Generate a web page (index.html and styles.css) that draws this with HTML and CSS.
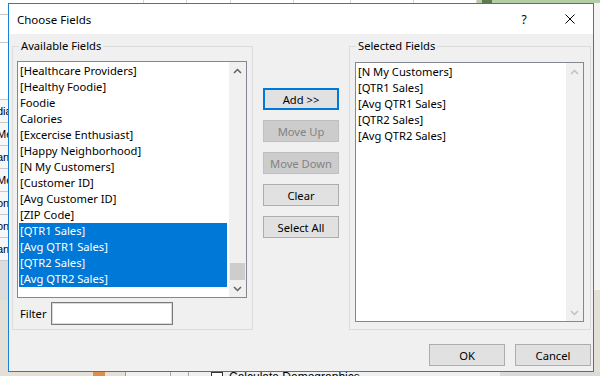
FILE: index.html
```html
<!DOCTYPE html>
<html lang="en">

<head>
	<meta charset="UTF-8">
	<title>Choose Fields</title>
	<link rel="stylesheet" href="styles.css">
</head>

<body>
	<div class="desk">
		<div class="sheet-top">
			<div class="cell"></div>
			<div class="cell"></div>
			<div class="cell"></div>
			<div class="cell"></div>
			<div class="cell"></div>
			<div class="cell"></div>
			<div class="cell"></div>
			<div class="cell green"><span class="mark"></span></div>
		</div>

		<div class="sheet-left">
			<div class="sl-a"></div>
			<div class="sl-b"></div>
			<div class="sl-c"></div>
			<div class="rec">dia</div>
			<div class="rec">Me</div>
			<div class="rec">an</div>
			<div class="rec">Me</div>
			<div class="rec">on</div>
			<div class="rec">on</div>
			<div class="rec">an</div>
			<div class="sl-grey"></div>
			<div class="sl-map"></div>
		</div>

		<div class="dialog">
			<div class="titlebar">
				<span class="title">Choose Fields</span>
				<span class="tb-btn">?</span>
				<span class="tb-btn">
					<svg width="10" height="10" viewBox="0 0 10 10"><path d="M0.5 0.5L9.5 9.5M9.5 0.5L0.5 9.5" stroke="#000" stroke-width="1" fill="none"/></svg>
				</span>
			</div>
			<div class="content">
				<div class="panes">
					<div class="group avail">
						<span class="group-title">Available Fields</span>
						<div class="listbox">
							<ul class="items">
								<li>[Healthcare Providers]</li>
								<li>[Healthy Foodie]</li>
								<li>Foodie</li>
								<li>Calories</li>
								<li>[Excercise Enthusiast]</li>
								<li>[Happy Neighborhood]</li>
								<li>[N My Customers]</li>
								<li>[Customer ID]</li>
								<li>[Avg Customer ID]</li>
								<li>[ZIP Code]</li>
								<li class="sel">[QTR1 Sales]</li>
								<li class="sel">[Avg QTR1 Sales]</li>
								<li class="sel">[QTR2 Sales]</li>
								<li class="sel">[Avg QTR2 Sales]</li>
							</ul>
							<div class="scrollbar">
								<span class="arrow"><svg width="9" height="6" viewBox="0 0 9 6"><path d="M1 5L4.5 1.5L8 5" fill="none" stroke="#606060" stroke-width="1.5"/></svg></span>
								<span class="track"><span class="thumb"></span></span>
								<span class="arrow"><svg width="9" height="6" viewBox="0 0 9 6"><path d="M1 1L4.5 4.5L8 1" fill="none" stroke="#606060" stroke-width="1.5"/></svg></span>
							</div>
						</div>
						<div class="filter-row">
							<label class="filter-label">Filter</label>
							<input type="text" class="filter">
						</div>
					</div>

					<div class="actions">
						<button class="btn default">Add &gt;&gt;</button>
						<button class="btn" disabled>Move Up</button>
						<button class="btn" disabled>Move Down</button>
						<button class="btn">Clear</button>
						<button class="btn">Select All</button>
					</div>

					<div class="group chosen">
						<span class="group-title">Selected Fields</span>
						<div class="listbox">
							<ul class="items">
								<li>[N My Customers]</li>
								<li>[QTR1 Sales]</li>
								<li>[Avg QTR1 Sales]</li>
								<li>[QTR2 Sales]</li>
								<li>[Avg QTR2 Sales]</li>
							</ul>
							<div class="scrollbar off">
								<span class="arrow"><svg width="9" height="6" viewBox="0 0 9 6"><path d="M1 5L4.5 1.5L8 5" fill="none" stroke="#c0c0c0" stroke-width="1.5"/></svg></span>
								<span class="track"></span>
								<span class="arrow"><svg width="9" height="6" viewBox="0 0 9 6"><path d="M1 1L4.5 4.5L8 1" fill="none" stroke="#c0c0c0" stroke-width="1.5"/></svg></span>
							</div>
						</div>
					</div>
				</div>
				<div class="footer">
					<button class="btn">OK</button>
					<button class="btn">Cancel</button>
				</div>
			</div>
		</div>

		<div class="sheet-right">
			<div class="sr-top"></div>
			<div class="sr-map"></div>
		</div>

		<div class="sheet-bottom">
			<div class="sb-map"><span class="road"></span></div>
			<div class="sb-cell"></div>
			<div class="sb-cell2"></div>
			<span class="sb-check"></span>
			<span class="sb-label">Calculate Demographics</span>
			<div class="sb-rest"></div>
		</div>
	</div>
</body>

</html>
```

FILE: styles.css
```css
* {
	margin: 0;
	padding: 0;
	box-sizing: border-box;
}

html,
body {
	width: 600px;
	height: 376px;
	overflow: hidden;
}

body {
	font-family: "Noto Sans", "DejaVu Sans", sans-serif;
	font-size: 11.2px;
	color: #000;
	background: #f0f0f0;
}

.desk {
	display: grid;
	grid-template-columns: 8px 586px 6px;
	grid-template-rows: 3px 369px 4px;
	width: 600px;
	height: 376px;
}

/* spreadsheet behind the dialog */
.sheet-top {
	grid-column: 1 / 4;
	display: flex;
	background: #fff;
}

.sheet-top .cell {
	border-right: 1px solid #d4d4d4;
	flex-shrink: 0;
}

.sheet-top .cell:nth-child(1) { width: 144px; }
.sheet-top .cell:nth-child(2) { width: 43px; }
.sheet-top .cell:nth-child(3) { width: 44px; }
.sheet-top .cell:nth-child(4) { width: 63px; }
.sheet-top .cell:nth-child(5) { width: 57px; }
.sheet-top .cell:nth-child(6) { width: 63px; }
.sheet-top .cell:nth-child(7) { width: 63px; }

.sheet-top .green {
	flex: 1;
	border: none;
	background: #b3cda6;
}

.green .mark {
	display: block;
	width: 10px;
	height: 3px;
	margin-left: 5px;
	background: #5d7a52;
}

.sheet-left {
	display: flex;
	flex-direction: column;
	background: #fff;
	overflow: hidden;
	font-family: "Liberation Sans", sans-serif;
	font-size: 11px;
}

.sl-a,
.sl-b,
.sl-c,
.rec {
	flex-shrink: 0;
	border-bottom: 1px solid #c8c8c8;
}

.sl-a { height: 12px; }
.sl-b { height: 28px; }
.sl-c { height: 57px; }

.rec {
	height: 23px;
	line-height: 22px;
	white-space: nowrap;
	text-indent: -3px;
	background: #f7f7f7;
}

.sl-grey {
	height: 39px;
	flex-shrink: 0;
	background: #dcdcdc;
}

.sl-map {
	flex: 1;
	background: #e4e0d8;
}

.sheet-right {
	display: flex;
	flex-direction: column;
}

.sr-top {
	flex: 1;
	background: #f4f4f4;
}

.sr-map {
	height: 82px;
	background: #e4e0d8;
}

.sheet-bottom {
	grid-column: 1 / 4;
	display: flex;
	overflow: hidden;
	background: #f0f0f0;
	font-family: "Liberation Sans", sans-serif;
	font-size: 12px;
}

.sb-map {
	width: 126px;
	flex-shrink: 0;
	background: #e4e0d8;
	border-right: 1px solid #9a9a9a;
}

.sb-map .road {
	display: block;
	width: 12px;
	height: 4px;
	margin-left: 93px;
	background: #d9904a;
}

.sb-cell {
	width: 45px;
	flex-shrink: 0;
	border-right: 1px solid #a8a8a8;
}

.sb-cell2 {
	width: 18px;
	flex-shrink: 0;
	border-right: 1px solid #a8a8a8;
}

.sb-check {
	width: 12px;
	height: 12px;
	flex-shrink: 0;
	margin-left: 22px;
	border: 1px solid #333;
	background: #fff;
}

.sb-label {
	margin-left: 6px;
	line-height: 10px;
	white-space: nowrap;
}

.sb-rest {
	margin-left: auto;
	width: 100px;
	background: #dadada;
}

/* dialog */
.dialog {
	display: flex;
	flex-direction: column;
	border: 1px solid #1a80d5;
	background: #f0f0f0;
}

.titlebar {
	display: flex;
	align-items: center;
	height: 30px;
	flex-shrink: 0;
	background: #fff;
}

.title {
	flex: 1;
	padding-left: 8px;
	font-size: 11.5px;
}

.tb-btn {
	width: 46px;
	height: 30px;
	display: flex;
	align-items: center;
	justify-content: center;
	font-size: 12px;
}

.content {
	flex: 1;
	padding: 12px 2px 5px 3px;
}

.panes {
	display: flex;
	height: 284px;
}

.group {
	position: relative;
	border: 1px solid #dcdcdc;
}

.group-title {
	position: absolute;
	top: -9px;
	left: 6px;
	padding: 0 2px;
	line-height: 16px;
	background: #f0f0f0;
}

.avail {
	width: 241px;
	padding: 14px 5px 4px 4px;
}

.chosen {
	width: 242px;
	padding: 15px 6px 7px 5px;
}

.listbox {
	display: flex;
	border: 1px solid #828790;
	background: #fff;
}

.avail .listbox {
	width: 230px;
	height: 237px;
}

.chosen .listbox {
	width: 229px;
	height: 260px;
}

.items {
	flex: 1;
	list-style: none;
	padding: 1px 2px 0 1px;
}

.items li {
	height: 16px;
	line-height: 16px;
	padding-left: 1px;
	white-space: nowrap;
}

.items li.sel {
	background: #0078d7;
	color: #fff;
}

.scrollbar {
	width: 17px;
	display: flex;
	flex-direction: column;
	background: #f0f0f0;
}

.arrow {
	height: 17px;
	display: flex;
	align-items: center;
	justify-content: center;
}

.track {
	flex: 1;
	display: flex;
	flex-direction: column;
	justify-content: flex-end;
}

.thumb {
	height: 17px;
	margin: 0 1px;
	background: #cdcdcd;
}

.filter-row {
	display: flex;
	align-items: center;
	height: 23px;
	margin-top: 4px;
}

.filter-label {
	width: 34px;
	padding-left: 3px;
}

.filter {
	width: 122px;
	height: 23px;
	border: 1px solid #7a7a7a;
	box-shadow: inset 0 0 0 1px #dadada;
	background: #fff;
	outline: none;
}

.actions {
	width: 96px;
	display: flex;
	flex-direction: column;
	align-items: center;
	gap: 10px;
	padding-top: 42px;
}

.btn {
	width: 76px;
	height: 22px;
	border: 1px solid #adadad;
	background: #e1e1e1;
	font-family: inherit;
	font-size: inherit;
	color: #000;
}

.btn.default {
	border: 2px solid #0078d7;
}

.btn:disabled {
	background: #cccccc;
	border-color: #bfbfbf;
	color: #838383;
}

.footer {
	display: flex;
	justify-content: flex-end;
	gap: 10px;
	margin-top: 14px;
}
```
